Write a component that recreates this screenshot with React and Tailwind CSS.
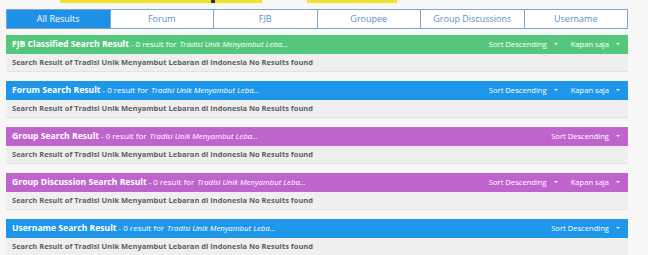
import React from 'react';

const TABS = ['All Results', 'Forum', 'FJB', 'Groupee', 'Group Discussions', 'Username'];

const SECTIONS = [
  { title: 'FJB Classified Search Result', color: 'bg-[#55c77c]', kapan: true },
  { title: 'Forum Search Result', color: 'bg-[#1e96ea]', kapan: true },
  { title: 'Group Search Result', color: 'bg-[#c064cd]', kapan: false },
  { title: 'Group Discussion Search Result', color: 'bg-[#c064cd]', kapan: true },
  { title: 'Username Search Result', color: 'bg-[#1e96ea]', kapan: false },
];

// small dropdown caret
const Caret = () => (
  <span className="ml-[7px] w-0 h-0 border-l-[2px] border-r-[2px] border-t-[2px] border-l-transparent border-r-transparent border-t-white/90" />
);

const App = () => {
  return (
    <div className="w-[648px] h-[255px] overflow-hidden bg-[#f7f7f7] relative" style={{ fontFamily: '"Open Sans", sans-serif' }}>
      {/* top yellow bars */}
      <div className="flex h-[3px]">
        <div className="w-[60px]" />
        <div className="w-[202px] bg-[#f0e12a]" />
        <div className="w-[45px]" />
        <div className="w-[90px] bg-[#f0e12a]" />
      </div>
      <div className="absolute left-[211px] top-0 w-[4px] h-[3px] bg-[#333]" />

      <div className="ml-[6px] w-[622px] pt-[6px]">
        {/* tabs */}
        <div className="flex h-[20px] border border-[#7fa6cf] bg-white">
          {TABS.map((t, i) => (
            <div
              key={t}
              className={`flex-1 flex items-center justify-center text-[9px] ${i > 0 ? 'border-l border-[#7fa6cf]' : ''} ${i === 0 ? 'bg-[#1e90e6] text-white' : 'text-[#5b8fc6]'}`}
            >
              {t}
            </div>
          ))}
        </div>

        <div className="mt-[6px] flex flex-col gap-[9px]">
          {SECTIONS.map((s) => (
            <div key={s.title}>
              <div className={`${s.color} h-[19px] flex items-center justify-between pl-[6px] pr-[8px] text-white`}>
                <div className="flex items-baseline whitespace-nowrap">
                  <span className="text-[8.6px] font-bold">{s.title}</span>
                  <span className="text-[8px] ml-[2px]">- 0 result for</span>
                  <span className="text-[7.8px] italic ml-[3px]">Tradisi Unik Menyambut Leba...</span>
                </div>
                <div className="flex items-center text-[7.6px]">
                  <span>Sort Descending</span>
                  <Caret />
                  {s.kapan && (
                    <>
                      <span className="ml-[13px]">Kapan saja</span>
                      <Caret />
                    </>
                  )}
                </div>
              </div>
              <div className="h-[18px] flex items-center px-[6px] bg-[#efefef] border-b border-[#e2e2e2] text-[7.5px] font-bold text-[#5e5e5e]">
                Search Result of Tradisi Unik Menyambut Lebaran di Indonesia No Results found
              </div>
            </div>
          ))}
        </div>
      </div>
    </div>
  );
};

export default App;
